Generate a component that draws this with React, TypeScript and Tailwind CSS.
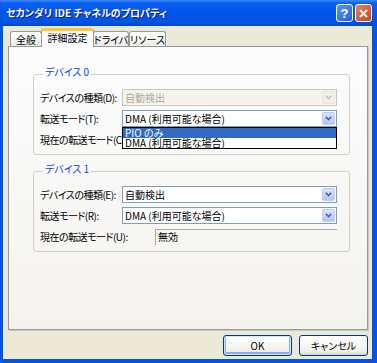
const Chevron = ({ color }: { color: string }) => (
  <svg width="7" height="5" viewBox="0 0 7 5">
    <path d="M0.8 0.8 L3.5 3.6 L6.2 0.8" fill="none" stroke={color} strokeWidth="1.6" />
  </svg>
);

const Combo = ({ text, disabled = false }: { text: string; disabled?: boolean }) => (
  <div
    className={`flex h-[17px] w-[215px] items-center border ${
      disabled ? "border-[#C9C7BA] bg-[#F5F4EA] text-[#ACA899]" : "border-[#7F9DB9] bg-white text-black"
    }`}
  >
    <span className="flex-1 pl-[2px] leading-none whitespace-nowrap">{text}</span>
    {disabled ? (
      <span className="mr-px flex h-[13px] w-[13px] items-center justify-center rounded-[2px] border border-[#E8E6DA] bg-[#F1F0E8]">
        <Chevron color="#C9C7BA" />
      </span>
    ) : (
      <span className="mr-px flex h-[13px] w-[13px] items-center justify-center rounded-[2px] border border-[#B9CCF8] bg-[linear-gradient(180deg,#D8E3FE,#B3C7F5)]">
        <Chevron color="#4D6185" />
      </span>
    )}
  </div>
);

const Row = ({ label, children }: { label: string; children: React.ReactNode }) => (
  <div className="flex h-[17px] items-center">
    <span className="w-[82px] whitespace-nowrap leading-none tracking-[-0.5px]">{label}</span>
    {children}
  </div>
);

const CurrentMode = ({ label, value }: { label: string; value: string }) => (
  <div className="flex h-[17px] items-center">
    <span className="w-[115px] whitespace-nowrap leading-none tracking-[-0.5px]">{label}</span>
    <div className="flex h-[16px] w-[182px] items-center border-t border-l border-t-[#ACA899] border-l-[#ACA899] pl-[2px] leading-none">
      {value}
    </div>
  </div>
);

const Group = ({ title, children }: { title: string; children: React.ReactNode }) => (
  <fieldset className="ml-[24px] w-[317px] rounded-[3px] border border-[#D0D0BF] pb-[6px] pl-[6px] pt-[7px]">
    <legend className="ml-[3px] px-[2px] pb-[4px] leading-[12px] text-[#0046D5]">{title}</legend>
    <div className="flex flex-col gap-[4px]">{children}</div>
  </fieldset>
);

const Tab = ({ label, active = false, w }: { label: string; active?: boolean; w: string }) =>
  active ? (
    <div
      className={`relative z-10 -mx-[1px] -mb-px flex h-[19px] ${w} items-start justify-center whitespace-nowrap rounded-t-[3px] border border-b-0 border-[#919B9C] border-t-[3px] border-t-[#FFC83C] bg-[#FCFCFE] pt-[2px] leading-none`}
    >
      {label}
    </div>
  ) : (
    <div
      className={`flex h-[15px] ${w} items-center justify-center whitespace-nowrap rounded-t-[3px] border border-b-0 border-[#919B9C] bg-[linear-gradient(180deg,#FFFFFF,#ECEBE6)] pt-[1px] leading-none`}
    >
      {label}
    </div>
  );

const XpButton = ({ label, isDefault = false }: { label: string; isDefault?: boolean }) => (
  <button
    className={`flex h-[21px] w-[69px] items-center justify-center rounded-[3px] border border-[#003C74] bg-[linear-gradient(180deg,#FFFFFF,#F0F0EA_80%,#D6D0C5)] leading-none text-black ${
      isDefault ? "shadow-[inset_0_0_0_1px_#CEE7FF,inset_0_-1px_0_2px_#8EAEEB]" : ""
    }`}
  >
    {label}
  </button>
);

export default function App() {
  return (
    <div className="flex h-[363px] w-[377px] flex-col bg-[#0055E5] text-[10px] text-black [font-family:'Noto_Sans_CJK_JP','Noto_Sans',sans-serif] [font-feature-settings:'palt']">
      {/* title bar */}
      <div className="flex h-[26px] items-center bg-[linear-gradient(180deg,#3A8CFF_0%,#0A5FF0_12%,#0056E8_50%,#0054E3_85%,#0047C8_100%)] pl-[6px] pr-[5px]">
        <span className="flex-1 whitespace-nowrap text-[10px] font-bold leading-none text-white [text-shadow:1px_1px_#0F1089]">
          セカンダリ IDE チャネルのプロパティ
        </span>
        <div className="flex gap-[2px]">
          <div className="flex h-[18px] w-[17px] items-center justify-center rounded-[3px] border border-white bg-[linear-gradient(135deg,#5A93FA,#2560DC)] text-[13px] font-bold leading-none text-white [font-family:'Liberation_Sans',sans-serif]">
            ?
          </div>
          <div className="flex h-[18px] w-[17px] items-center justify-center rounded-[3px] border border-white bg-[linear-gradient(135deg,#E7826A,#C8441A)]">
            <svg width="9" height="9" viewBox="0 0 9 9">
              <path d="M1 1 L8 8 M8 1 L1 8" stroke="white" strokeWidth="1.8" />
            </svg>
          </div>
        </div>
      </div>

      {/* client area */}
      <div className="mb-[4px] ml-[3px] mr-[5px] flex flex-1 flex-col bg-[#ECE9D8] pl-[5px] pr-[4px] pt-[2px]">
        <div className="flex items-end pl-[2px]">
          <Tab label="全般" w="w-[32px]" />
          <Tab label="詳細設定" active w="w-[53px]" />
          <Tab label="ドライバ" w="w-[36px]" />
          <Tab label="リソース" w="w-[37px]" />
        </div>
        <div className="flex h-[284px] flex-col border border-[#919B9C] bg-[linear-gradient(180deg,#FCFCFE,#F4F3EE)] pt-[19px] shadow-[1px_1px_0_#C9C7BA]">
          <Group title="デバイス 0">
            <Row label="デバイスの種類(D):">
              <Combo text="自動検出" disabled />
            </Row>
            <Row label="転送モード(T):">
              <div className="relative">
                <Combo text="DMA (利用可能な場合)" />
                <div className="absolute left-0 top-full z-20 w-[215px] border border-black bg-white">
                  <div className="flex h-[10px] items-center bg-[#316AC5] pl-[2px] leading-none text-white">PIO のみ</div>
                  <div className="flex h-[10px] items-center pl-[2px] leading-none">DMA (利用可能な場合)</div>
                </div>
              </div>
            </Row>
            <CurrentMode label="現在の転送モード(C):" value="" />
          </Group>
          <div className="h-[8px]" />
          <Group title="デバイス 1">
            <Row label="デバイスの種類(E):">
              <Combo text="自動検出" />
            </Row>
            <Row label="転送モード(R):">
              <Combo text="DMA (利用可能な場合)" />
            </Row>
            <CurrentMode label="現在の転送モード(U):" value="無効" />
          </Group>
        </div>
        <div className="mt-[5px] flex justify-end gap-[7px]">
          <XpButton label="OK" isDefault />
          <XpButton label="キャンセル" />
        </div>
      </div>
    </div>
  );
}
